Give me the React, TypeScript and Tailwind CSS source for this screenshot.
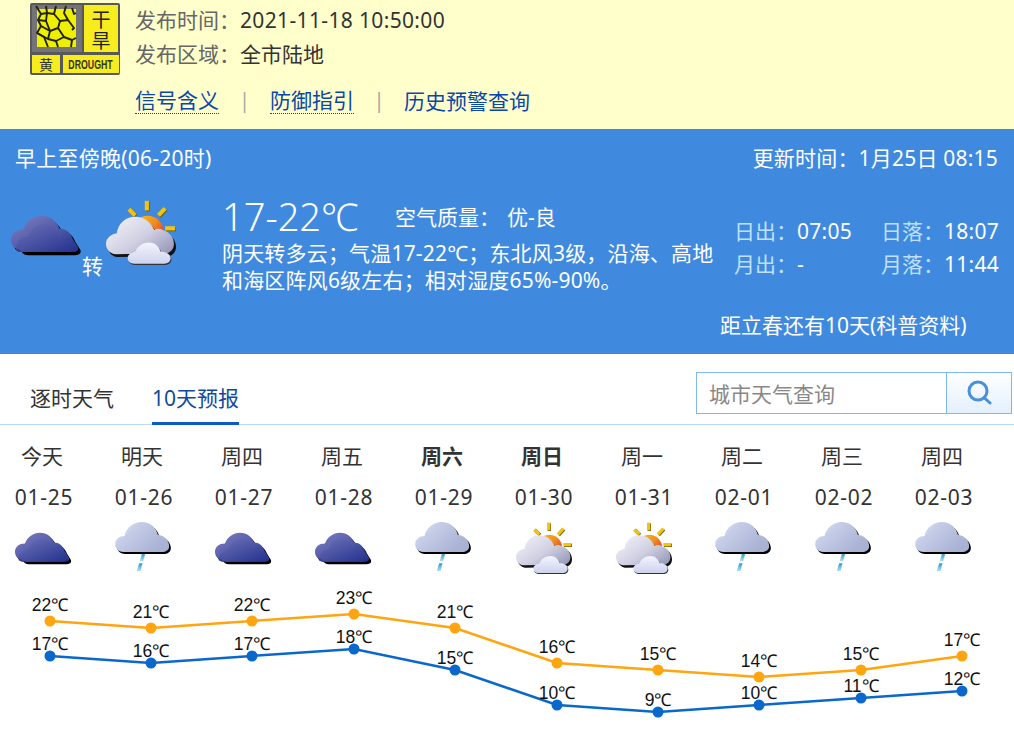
import React from "react";

const F = { fontFamily: '"Noto Sans", "Noto Sans CJK SC", sans-serif' };
const CLOUD = "M8 34 C2 34 0 29 0 25 C0 19 5 15 12 15 C15 7 22 2 30 2 C39 2 45 8 47 14 C53 14 58 18 60 24 L65 32 C66 35 64 37 60 37 L14 37 C11 37 9 36 8 34 Z";
const RAIN = "M25 90 C8 90 0 78 0 66 C0 52 12 42 28 42 C34 16 55 0 80 0 C104 0 122 16 128 38 C148 40 162 56 162 72 C162 84 152 90 140 90 Z";
const MAIN = "M22 130 C7 128 0 116 0 105 C0 92 12 82 26 80 C28 58 46 40 70 40 C92 40 108 54 116 72 C122 68 130 68 136 72 C152 76 163 90 163 105 C163 118 155 126 145 128 Z";
const SMALL = "M68 153 C58 153 52 147 52 140 C52 131 60 126 70 125 C74 112 88 102 103 102 C118 102 128 112 131 124 C145 124 155 130 155 140 C155 148 148 153 140 153 Z";

function Defs() {
  return (
    <svg width="0" height="0" className="absolute">
      <defs>
        <linearGradient id="dk" x1="0" y1="0" x2="1" y2="1">
          <stop offset="0" stopColor="#8080bf" />
          <stop offset="0.55" stopColor="#4f58a8" />
          <stop offset="1" stopColor="#1d2a86" />
        </linearGradient>
        <linearGradient id="dk2" x1="0" y1="0" x2="0.9" y2="1">
          <stop offset="0" stopColor="#6a6fb5" />
          <stop offset="1" stopColor="#273490" />
        </linearGradient>
        <linearGradient id="rn" x1="0" y1="0" x2="1" y2="0.6">
          <stop offset="0" stopColor="#eef0f8" />
          <stop offset="0.35" stopColor="#c5cde8" />
          <stop offset="1" stopColor="#a9b1d4" />
        </linearGradient>
        <linearGradient id="wh" x1="0" y1="0" x2="1" y2="0.8">
          <stop offset="0" stopColor="#f6f6fc" />
          <stop offset="0.6" stopColor="#cfcfe2" />
          <stop offset="1" stopColor="#9a9dbc" />
        </linearGradient>
        <linearGradient id="wh2" x1="0" y1="0" x2="0" y2="1">
          <stop offset="0" stopColor="#f4f4fb" />
          <stop offset="1" stopColor="#cdd3ef" />
        </linearGradient>
        <linearGradient id="sun" x1="0" y1="0" x2="1" y2="0.7">
          <stop offset="0" stopColor="#f7cf16" />
          <stop offset="0.6" stopColor="#f08a20" />
          <stop offset="1" stopColor="#e4352b" />
        </linearGradient>
        <linearGradient id="drop" x1="0" y1="0" x2="0" y2="1">
          <stop offset="0" stopColor="#2f9fc4" />
          <stop offset="1" stopColor="#a8e0f2" />
        </linearGradient>
      </defs>
    </svg>
  );
}

function DarkCloud({ w }: { w: number }) {
  return (
    <svg width={w} height={(w * 42) / 70} viewBox="0 0 70 42" className="block">
      <path d={CLOUD} transform="translate(2.5 3)" fill="#000" />
      <path d={CLOUD} fill="url(#dk)" />
      <path d="M5 36 C4 28 8 23 17 22 C19 14 26 9 33 10 C40 11 45 16 46 23 C52 23 58 24 62 29 L65 32 C66 35 64 37 60 37 L14 37 C10 37 7 37 5 36 Z" fill="url(#dk2)" opacity="0.8" />
    </svg>
  );
}

function RainCloud() {
  return (
    <svg width="57" height="50" viewBox="0 0 170 150" className="block">
      <path d="M80 95 L90 95 L84 118 L74 118 Z" fill="url(#drop)" />
      <path d="M72 124 L82 124 L76 147 L65 147 Z" fill="url(#drop)" />
      <path d={RAIN} transform="translate(5 6)" fill="#000" />
      <path d={RAIN} fill="url(#rn)" />
    </svg>
  );
}

function SunCloud({ s = 1 }: { s?: number }) {
  const rays = [
    "M55 22 L70 37",
    "M98 2 L98 25",
    "M142 20 L126 37",
    "M142 68 L166 68",
    "M33 66 L44 66",
  ];
  return (
    <svg width={56 * s} height={52 * s} viewBox="0 0 168 156" className="block">
      {rays.map((d) => (
        <path key={d + "s"} d={d} transform="translate(2 2)" stroke="#6b5a10" strokeWidth="10" />
      ))}
      {rays.map((d) => (
        <path key={d} d={d} stroke="#f2c40c" strokeWidth="10" />
      ))}
      <circle cx="100" cy="76" r="38" fill="url(#sun)" />
      <path d={MAIN} transform="translate(5 7)" fill="#111" />
      <path d={MAIN} fill="url(#wh)" />
      <path d={SMALL} transform="translate(2 3)" fill="#333" />
      <path d={SMALL} fill="url(#wh2)" />
    </svg>
  );
}

function DroughtIcon() {
  const cracks = [
    "M36 6 L41 14 L38 20 L41 26 L37 33 L44 37 L48 47",
    "M46 6 L47 13 L41 14",
    "M56 6 L54 14 L47 13 L46 21 L38 20",
    "M54 14 L60 21 L58 28 L50 31 L46 21",
    "M60 21 L68 20 L74 28 L72 30",
    "M66 6 L64 13 L68 20",
    "M41 26 L50 31 L48 39 L37 33",
    "M58 28 L64 37 L72 40 L76 38",
    "M64 37 L56 41 L48 39",
    "M56 41 L58 47",
    "M72 40 L71 47",
    "M72 8 L74 14 L76 13",
  ];
  return (
    <svg width="90" height="72" viewBox="0 0 90 72" className="block">
      <g transform="translate(-30 -3)">
        <rect x="30" y="3" width="90" height="72" rx="2" fill="#58585a" />
        <rect x="32" y="5" width="50" height="47" fill="#747476" />
        <rect x="37" y="9" width="39" height="38" fill="#eef000" />
        <g fill="none" stroke="#222210" strokeWidth="1.9" strokeLinejoin="round">
          {cracks.map((d) => (
            <path key={d} d={d} />
          ))}
        </g>
        <rect x="84" y="5" width="34" height="47" fill="#f7ec1e" />
        <rect x="32" y="55" width="28" height="18" fill="#f7ec1e" />
        <rect x="63" y="55" width="56" height="18" fill="#f7ec1e" />
        <text x="101" y="27" textAnchor="middle" fontSize="19" fill="#222" style={F}>干</text>
        <text x="101" y="48" textAnchor="middle" fontSize="19" fill="#222" style={F}>旱</text>
        <text x="46" y="70" textAnchor="middle" fontSize="14" fill="#333" style={F}>黄</text>
        <g transform="translate(90.5 69) scale(0.73 1)">
          <text x="0" y="0" textAnchor="middle" fontSize="12" fontWeight="700" fill="#333" style={{ fontFamily: '"Liberation Sans", sans-serif' }}>DROUGHT</text>
        </g>
      </g>
    </svg>
  );
}

const xs = [50, 151, 252, 354, 455, 557, 658, 759, 861, 962];
const hi = [621, 628, 621, 614, 628, 663, 670, 677, 670, 656];
const lo = [656, 663, 656, 649, 670, 705, 712, 705, 698, 691];
const hiT = [22, 21, 22, 23, 21, 16, 15, 14, 15, 17];
const loT = [17, 16, 17, 18, 15, 10, 9, 10, 11, 12];
const TOP = 591;

function Chart() {
  const series = [
    { ys: hi, ts: hiT, c: "#ffa50f", o: 10 },
    { ys: lo, ts: loT, c: "#0a68cc", o: 6.5 },
  ];
  return (
    <svg width="1014" height="149" viewBox={`0 ${TOP} 1014 149`} className="block" style={{ fontFamily: '"Liberation Sans", Arial, sans-serif' }}>
      {series.map((s) => (
        <g key={s.c}>
          <polyline points={xs.map((x, i) => `${x},${s.ys[i]}`).join(" ")} fill="none" stroke={s.c} strokeWidth="2.5" />
          {xs.map((x, i) => (
            <circle key={x} cx={x} cy={s.ys[i]} r="5.5" fill={s.c} />
          ))}
          {xs.map((x, i) => (
            <text key={x} x={x} y={s.ys[i] - s.o} textAnchor="middle" fontSize="17.5" fill="#111">{s.ts[i]}℃</text>
          ))}
        </g>
      ))}
    </svg>
  );
}

const days = [
  ["今天", "01-25", "d"],
  ["明天", "01-26", "r"],
  ["周四", "01-27", "d"],
  ["周五", "01-28", "d"],
  ["周六", "01-29", "r"],
  ["周日", "01-30", "s"],
  ["周一", "01-31", "s"],
  ["周二", "02-01", "r"],
  ["周三", "02-02", "r"],
  ["周四", "02-03", "r"],
];

export default function App() {
  return (
    <div className="relative w-[1014px] h-[740px] overflow-hidden bg-white text-[21px] text-[#333]" style={F}>
      <Defs />
      {/* alert */}
      <div className="h-[129px] bg-[#ffffcc] flex pl-[30px] pt-[3px] gap-[15px]">
        <DroughtIcon />
        <div className="flex flex-col">
          <div className="flex h-[36px] items-center text-[#666]">
            <span className="w-[105px]">发布时间：</span>
            <span className="text-[#333] tracking-[0.35px]">2021-11-18 10:50:00</span>
          </div>
          <div className="flex h-[32px] items-center text-[#666]">
            <span className="w-[105px]">发布区域：</span>
            <span className="text-[#333]">全市陆地</span>
          </div>
          <div className="flex items-center mt-[15px] h-[30px] text-[#0b47a8]">
            <span className="border-b border-dotted border-[#0b47a8] leading-[25px]">信号含义</span>
            <span className="w-[51px] text-center text-[#aaa]">|</span>
            <span className="border-b border-dotted border-[#0b47a8] leading-[25px]">防御指引</span>
            <span className="w-[50px] text-center text-[#aaa]">|</span>
            <span className="leading-[25px]">历史预警查询</span>
          </div>
        </div>
      </div>
      {/* current */}
      <div className="h-[225px] bg-[#3f8ade] text-white flex flex-col">
        <div className="flex justify-between pl-[15px] pr-[16px] h-[60px] items-center">
          <span className="tracking-[0.25px]">早上至傍晚(06-20时)</span>
          <span className="tracking-[0.2px]">更新时间：1月25日 08:15</span>
        </div>
        <div className="flex">
          <div className="w-[217px] shrink-0 flex items-start pl-[11px] pt-[10px]">
            <div className="mt-[15px] shrink-0">
              <DarkCloud w={72} />
            </div>
            <span className="mt-[52px] -ml-[1px] shrink-0">转</span>
            <div className="ml-[3px] shrink-0 pt-[1px]">
              <SunCloud s={1.25} />
            </div>
          </div>
          <div className="w-[495px] shrink-0 ml-[5px]">
            <div className="flex items-center h-[50px]">
              <span className="text-[38px] w-[173px] leading-[50px] font-light mt-[3px]">17-22℃</span>
              <span className="w-[112px] mt-[8px]">空气质量：</span>
              <span className="mt-[8px]">优-良</span>
            </div>
            <div className="leading-[27px] mt-[1px] whitespace-nowrap tracking-[0.18px]">
              <div>阴天转多云；气温17-22℃；东北风3级，沿海、高地</div>
              <div>和海区阵风6级左右；相对湿度65%-90%。</div>
            </div>
          </div>
          <div className="ml-[17px] grid grid-cols-[147px_1fr] grid-rows-[33px_33px] mt-[27px] text-[#bfe0fb] whitespace-nowrap">
            <span>日出：<span className="text-white tracking-[0.3px]">07:05</span></span>
            <span>日落：<span className="text-white tracking-[0.3px]">18:07</span></span>
            <span>月出：<span className="text-white">-</span></span>
            <span>月落：<span className="text-white tracking-[0.3px]">11:44</span></span>
          </div>
        </div>
        <div className="mt-auto mb-[13px] pl-[720px] whitespace-nowrap">距立春还有10天(科普资料)</div>
      </div>
      {/* tabs */}
      <div className="h-[71px] flex items-start border-b border-[#b9d9f9] pl-[30px]">
        <span className="mt-[29px] leading-[30px]">逐时天气</span>
        <span className="ml-[38px] mt-[29px] h-[42px] leading-[30px] border-b-[3px] border-[#0f5cc0] text-[#0f4aa0]">10天预报</span>
        <div className="flex ml-[457px] mt-[18px] h-[42px]">
          <div className="w-[251px] border border-[#7db8f0] pl-[12px] pt-[3px] flex items-center text-[#888]">城市天气查询</div>
          <div className="w-[66px] -ml-px border border-[#7db8f0] bg-gradient-to-b from-white to-[#e3f0fd] flex items-center justify-center">
            <svg width="26" height="26" viewBox="0 0 26 26" fill="none" stroke="#4a90d9" strokeWidth="3" strokeLinecap="round">
              <circle cx="12" cy="11" r="9" />
              <path d="M18.5 18 L24 23" />
            </svg>
          </div>
        </div>
      </div>
      {/* days */}
      <div className="grid grid-cols-10 w-[1000px] -ml-[8px] h-[166px]">
        {days.map(([d, t, k], i) => (
          <div key={t} className="flex flex-col items-center">
            <div className={`h-[40px] mt-[11px] mb-[1px] leading-[40px] ${i === 4 || i === 5 ? "font-bold" : ""}`}>{d}</div>
            <div className="h-[40px] leading-[40px] pl-[4px] tracking-[0.7px]">{t}</div>
            <div className="h-[58px] mt-[5px] pl-[3px] flex items-start">
              {k === "d" && <div className="pt-[9px]"><DarkCloud w={58} /></div>}
              {k === "r" && <RainCloud />}
              {k === "s" && <SunCloud />}
            </div>
          </div>
        ))}
      </div>
      <Chart />
    </div>
  );
}
